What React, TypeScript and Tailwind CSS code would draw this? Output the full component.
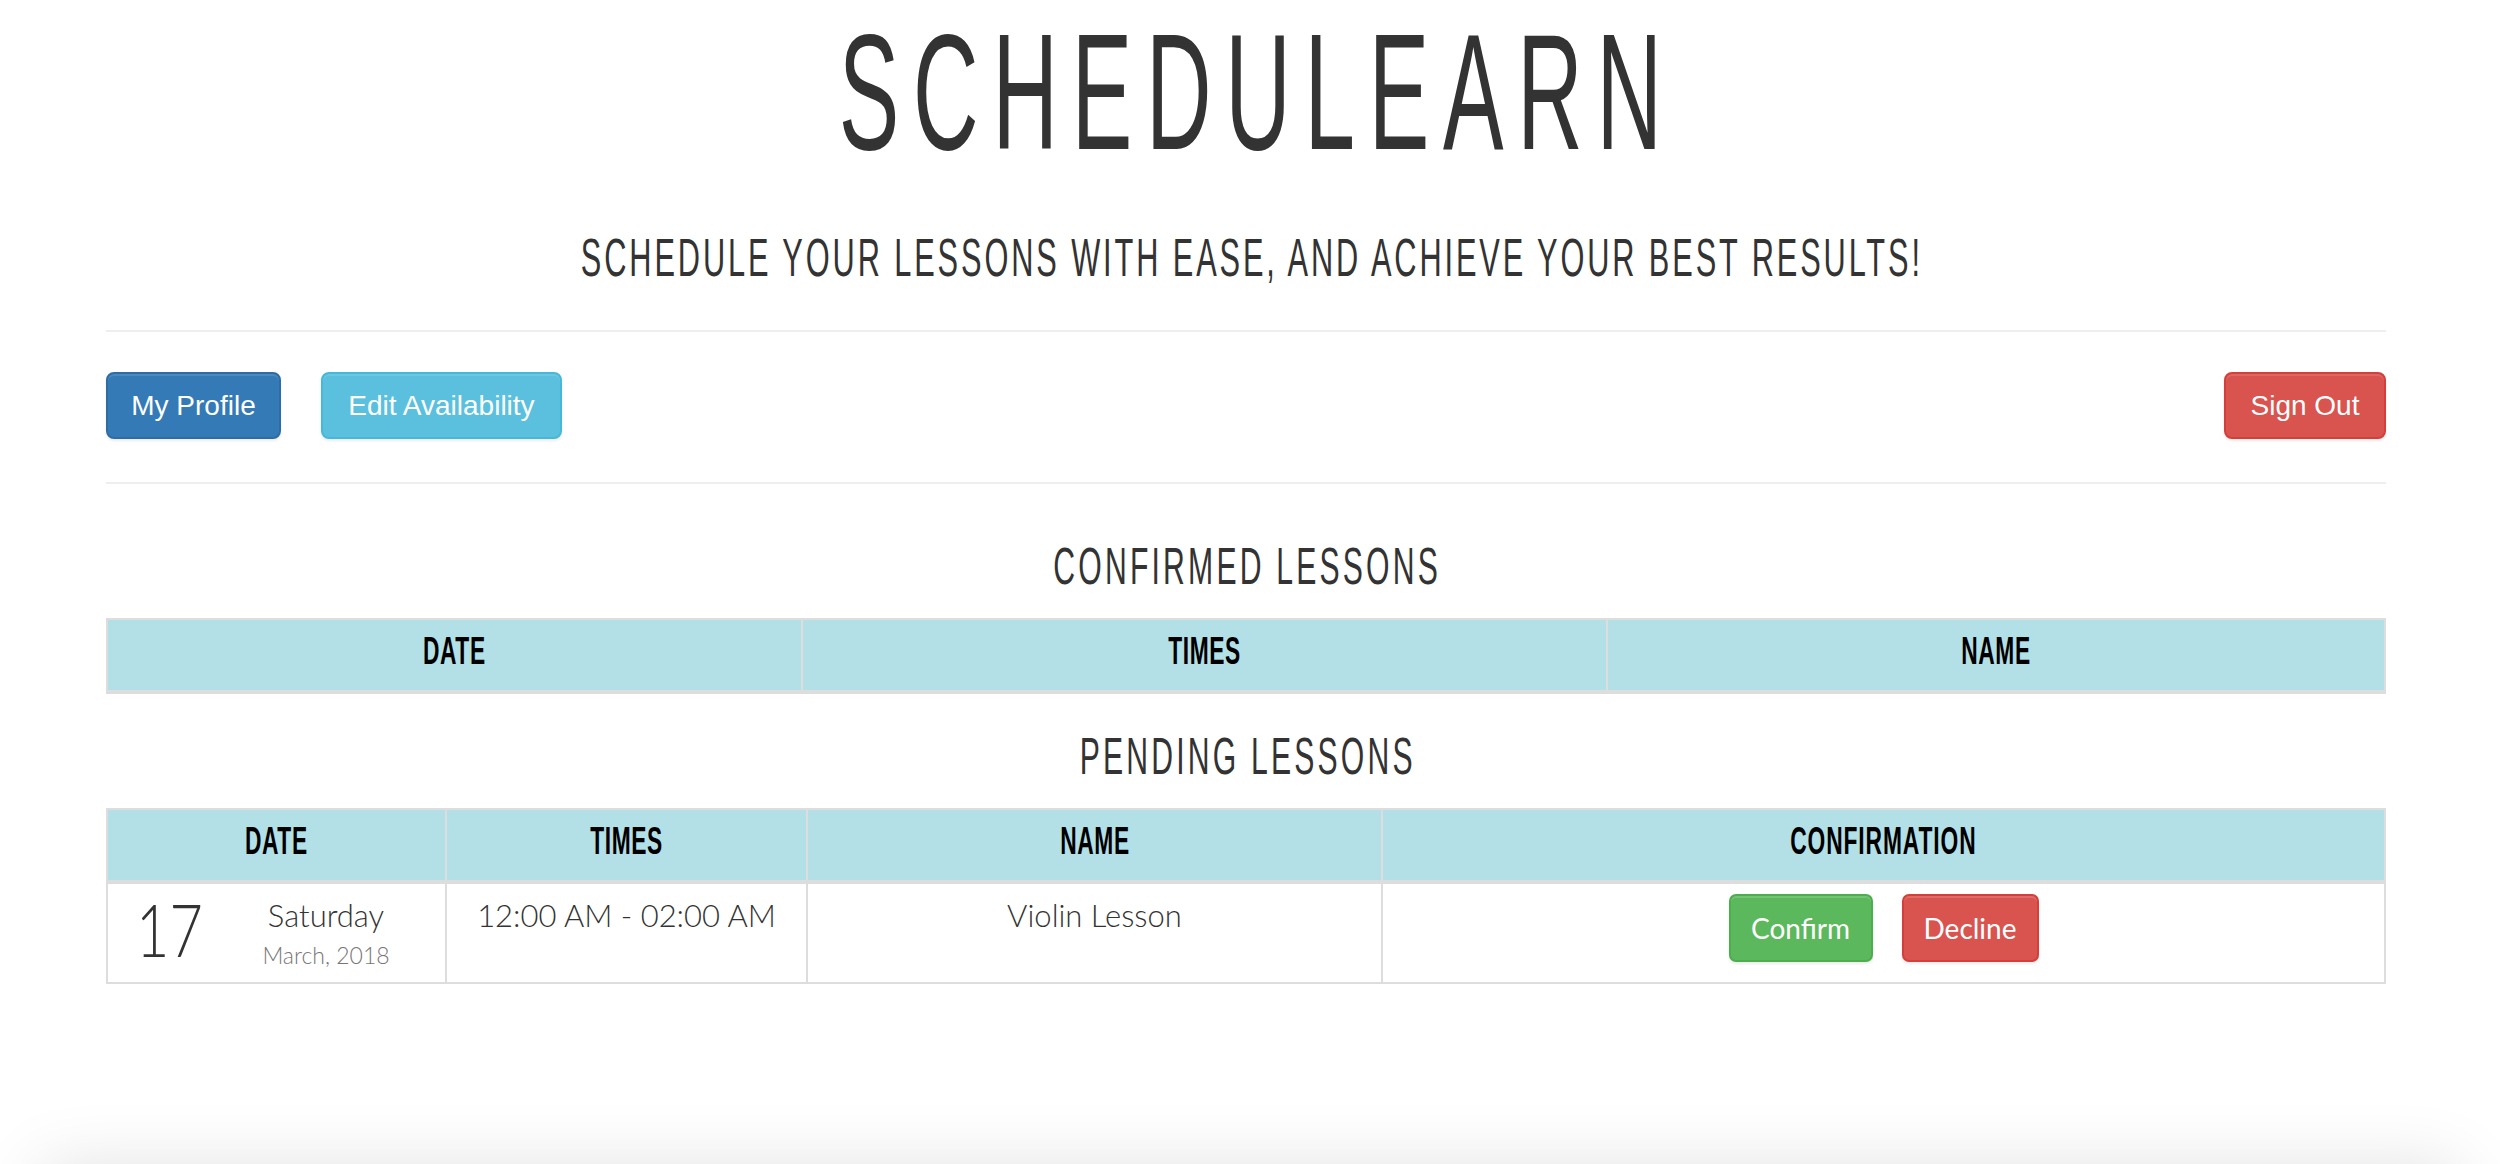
import React from 'react';

const pending = [
  {
    day: '17',
    weekday: 'Saturday',
    month: 'March, 2018',
    times: '12:00 AM - 02:00 AM',
    name: 'Violin Lesson',
  },
];

function Narrow({ children, className = '' }: { children: React.ReactNode; className?: string }) {
  return <span className={`inline-block whitespace-nowrap origin-center ${className}`}>{children}</span>;
}

export default function App() {
  return (
    <div className="h-[1164px] overflow-hidden bg-white font-['Liberation_Sans',Arial,sans-serif] text-[#333]">
      {/* Title */}
      <div className="text-center">
        <h1 className="text-[165px] leading-[184px] font-normal">
          <Narrow className="scale-x-[0.55] pl-[25px] tracking-[25px]">SCHEDULEARN</Narrow>
        </h1>
        <p className="mt-[47px] text-[53px] leading-none">
          <Narrow className="scale-x-[0.58] pl-[5px] tracking-[5px]">SCHEDULE YOUR LESSONS WITH EASE, AND ACHIEVE YOUR BEST RESULTS!</Narrow>
        </p>
      </div>

      <div className="ml-[106px] w-[2280px]">
        <div className="mt-[46px] h-[2px] bg-[#eee]" />

        {/* Actions */}
        <div className="mt-[40px] flex items-center justify-between">
          <div className="flex gap-[40px]">
            <button className="h-[67px] w-[175px] rounded-[8px] border-2 border-[#2e6da4] bg-[#337ab7] text-[28px] text-white shadow-[inset_0_2px_0_rgba(255,255,255,0.12),0_2px_3px_rgba(0,0,0,0.08)]">
              My Profile
            </button>
            <button className="h-[67px] w-[241px] rounded-[8px] border-2 border-[#46b8da] bg-[#5bc0de] text-[28px] text-white shadow-[inset_0_2px_0_rgba(255,255,255,0.12),0_2px_3px_rgba(0,0,0,0.08)]">
              Edit Availability
            </button>
          </div>
          <button className="h-[67px] w-[162px] rounded-[8px] border-2 border-[#d43f3a] bg-[#d9534f] text-[28px] text-white shadow-[inset_0_2px_0_rgba(255,255,255,0.12),0_2px_3px_rgba(0,0,0,0.08)]">
            Sign Out
          </button>
        </div>

        <div className="mt-[43px] h-[2px] bg-[#eee]" />

        {/* Confirmed */}
        <h2 className="mt-[56px] text-center text-[52px] leading-none font-normal">
          <Narrow className="scale-x-[0.58] pl-[5px] tracking-[5.5px]">CONFIRMED LESSONS</Narrow>
        </h2>
        <table className="mt-[26px] w-full border-collapse border-2 border-[#ddd]">
          <thead>
            <tr className="bg-[#b3dfe6]">
              <th className="w-[695px] border-2 border-b-4 border-[#ddd] pt-[12px] pb-[20px] text-[38px] leading-none font-bold text-black">
                <Narrow className="scale-x-[0.6] tracking-[1px]">DATE</Narrow>
              </th>
              <th className="w-[805px] border-2 border-b-4 border-[#ddd] pt-[12px] pb-[20px] text-[38px] leading-none font-bold text-black">
                <Narrow className="scale-x-[0.6] tracking-[1px]">TIMES</Narrow>
              </th>
              <th className="border-2 border-b-4 border-[#ddd] pt-[12px] pb-[20px] text-[38px] leading-none font-bold text-black">
                <Narrow className="scale-x-[0.6] tracking-[1px]">NAME</Narrow>
              </th>
            </tr>
          </thead>
        </table>

        {/* Pending */}
        <h2 className="mt-[36px] text-center text-[52px] leading-none font-normal">
          <Narrow className="scale-x-[0.58] pl-[5px] tracking-[5.5px]">PENDING LESSONS</Narrow>
        </h2>
        <table className="mt-[26px] w-full border-collapse border-2 border-[#ddd]">
          <thead>
            <tr className="bg-[#b3dfe6]">
              <th className="w-[339px] border-2 border-b-4 border-[#ddd] pt-[12px] pb-[20px] text-[38px] leading-none font-bold text-black">
                <Narrow className="scale-x-[0.6] tracking-[1px]">DATE</Narrow>
              </th>
              <th className="w-[361px] border-2 border-b-4 border-[#ddd] pt-[12px] pb-[20px] text-[38px] leading-none font-bold text-black">
                <Narrow className="scale-x-[0.6] tracking-[1px]">TIMES</Narrow>
              </th>
              <th className="w-[575px] border-2 border-b-4 border-[#ddd] pt-[12px] pb-[20px] text-[38px] leading-none font-bold text-black">
                <Narrow className="scale-x-[0.6] tracking-[1px]">NAME</Narrow>
              </th>
              <th className="border-2 border-b-4 border-[#ddd] pt-[12px] pb-[20px] text-[38px] leading-none font-bold text-black">
                <Narrow className="scale-x-[0.6] tracking-[1.5px]">CONFIRMATION</Narrow>
              </th>
            </tr>
          </thead>
          <tbody className="font-['Lato',sans-serif] font-light text-[#333]">
            {pending.map((p) => (
              <tr key={p.day + p.name}>
                <td className="h-[101px] border-2 border-[#ddd] p-0 align-top">
                  <div className="flex">
                    <div className="w-[138px] pt-[9px] pl-[28px] text-[72px] leading-none">
                      <span className="inline-block origin-left scale-x-[0.8]">{p.day}</span>
                    </div>
                    <div className="w-[160px] pt-[13px] text-center">
                      <div className="text-[31px] leading-[36px]">{p.weekday}</div>
                      <div className="mt-[8px] text-[23px] leading-[28px] text-[#777]">{p.month}</div>
                    </div>
                  </div>
                </td>
                <td className="border-2 border-[#ddd] pt-[13px] text-center align-top text-[31px] leading-[36px]">
                  {p.times}
                </td>
                <td className="border-2 border-[#ddd] pt-[13px] text-center align-top text-[31px] leading-[36px]">
                  {p.name}
                </td>
                <td className="border-2 border-[#ddd] pt-[10px] align-top">
                  <div className="flex justify-center gap-[29px] font-normal">
                    <button className="h-[68px] w-[144px] rounded-[7px] border-2 border-[#4cae4c] bg-[#5cb85c] text-[28px] text-white shadow-[inset_0_2px_0_rgba(255,255,255,0.15),0_2px_3px_rgba(0,0,0,0.08)]">
                      Confirm
                    </button>
                    <button className="h-[68px] w-[137px] rounded-[7px] border-2 border-[#d43f3a] bg-[#d9534f] text-[28px] text-white shadow-[inset_0_2px_0_rgba(255,255,255,0.15),0_2px_3px_rgba(0,0,0,0.08)]">
                      Decline
                    </button>
                  </div>
                </td>
              </tr>
            ))}
          </tbody>
        </table>
      </div>

      {/* Footer, mostly below the fold */}
      <footer className="mx-[40px] mt-[183px] h-[120px] bg-white shadow-[0_0_70px_rgba(0,0,0,0.12)]" />
    </div>
  );
}
